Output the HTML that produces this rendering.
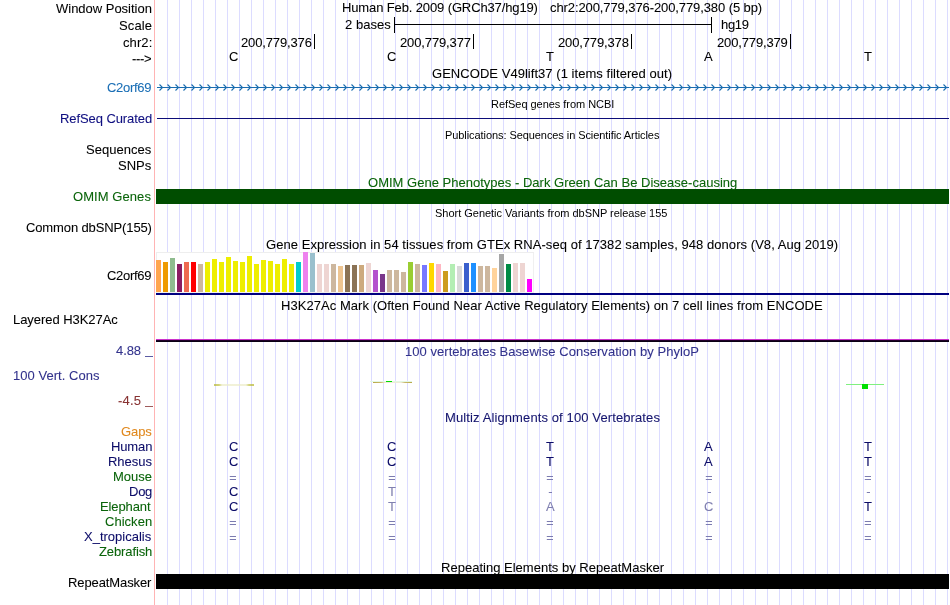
<!DOCTYPE html>
<html><head><meta charset="utf-8"><style>
html,body{margin:0;padding:0;background:#fff;}
#c{position:relative;width:950px;height:605px;overflow:hidden;background:#fff;}
.t{position:absolute;white-space:nowrap;font-family:'Liberation Sans', sans-serif;line-height:13px;will-change:transform;}
.r{position:absolute;}
</style></head><body><div id="c">
<div class="r" style="left:167px;top:0;width:783px;height:605px;background-image:linear-gradient(to right,#DCDCFF 1px,transparent 1px);background-size:12px 605px;"></div>
<div class="r" style="left:154px;top:0;width:1px;height:605px;background:#FFB4B4"></div>
<div class="r" style="left:394px;top:24px;width:318px;height:1px;background:#000;"></div>
<div class="r" style="left:394px;top:17px;width:1px;height:16px;background:#000;"></div>
<div class="r" style="left:711px;top:17px;width:1px;height:16px;background:#000;"></div>
<div class="r" style="left:314px;top:34px;width:1px;height:15px;background:#000;"></div>
<div class="r" style="left:473px;top:34px;width:1px;height:15px;background:#000;"></div>
<div class="r" style="left:631px;top:34px;width:1px;height:15px;background:#000;"></div>
<div class="r" style="left:790px;top:34px;width:1px;height:15px;background:#000;"></div>
<svg class="r" style="left:0;top:0" width="950" height="605"><rect x="157" y="87" width="792" height="1" fill="#1A6DB0"/><path d="M159.5,84.5L162.5,87.5L159.5,90.5M167.5,84.5L170.5,87.5L167.5,90.5M175.5,84.5L178.5,87.5L175.5,90.5M183.5,84.5L186.5,87.5L183.5,90.5M191.5,84.5L194.5,87.5L191.5,90.5M199.5,84.5L202.5,87.5L199.5,90.5M207.5,84.5L210.5,87.5L207.5,90.5M215.5,84.5L218.5,87.5L215.5,90.5M223.5,84.5L226.5,87.5L223.5,90.5M231.5,84.5L234.5,87.5L231.5,90.5M239.5,84.5L242.5,87.5L239.5,90.5M247.5,84.5L250.5,87.5L247.5,90.5M255.5,84.5L258.5,87.5L255.5,90.5M263.5,84.5L266.5,87.5L263.5,90.5M271.5,84.5L274.5,87.5L271.5,90.5M279.5,84.5L282.5,87.5L279.5,90.5M287.5,84.5L290.5,87.5L287.5,90.5M295.5,84.5L298.5,87.5L295.5,90.5M303.5,84.5L306.5,87.5L303.5,90.5M311.5,84.5L314.5,87.5L311.5,90.5M319.5,84.5L322.5,87.5L319.5,90.5M327.5,84.5L330.5,87.5L327.5,90.5M335.5,84.5L338.5,87.5L335.5,90.5M343.5,84.5L346.5,87.5L343.5,90.5M351.5,84.5L354.5,87.5L351.5,90.5M359.5,84.5L362.5,87.5L359.5,90.5M367.5,84.5L370.5,87.5L367.5,90.5M375.5,84.5L378.5,87.5L375.5,90.5M383.5,84.5L386.5,87.5L383.5,90.5M391.5,84.5L394.5,87.5L391.5,90.5M399.5,84.5L402.5,87.5L399.5,90.5M407.5,84.5L410.5,87.5L407.5,90.5M415.5,84.5L418.5,87.5L415.5,90.5M423.5,84.5L426.5,87.5L423.5,90.5M431.5,84.5L434.5,87.5L431.5,90.5M439.5,84.5L442.5,87.5L439.5,90.5M447.5,84.5L450.5,87.5L447.5,90.5M455.5,84.5L458.5,87.5L455.5,90.5M463.5,84.5L466.5,87.5L463.5,90.5M471.5,84.5L474.5,87.5L471.5,90.5M479.5,84.5L482.5,87.5L479.5,90.5M487.5,84.5L490.5,87.5L487.5,90.5M495.5,84.5L498.5,87.5L495.5,90.5M503.5,84.5L506.5,87.5L503.5,90.5M511.5,84.5L514.5,87.5L511.5,90.5M519.5,84.5L522.5,87.5L519.5,90.5M527.5,84.5L530.5,87.5L527.5,90.5M535.5,84.5L538.5,87.5L535.5,90.5M543.5,84.5L546.5,87.5L543.5,90.5M551.5,84.5L554.5,87.5L551.5,90.5M559.5,84.5L562.5,87.5L559.5,90.5M567.5,84.5L570.5,87.5L567.5,90.5M575.5,84.5L578.5,87.5L575.5,90.5M583.5,84.5L586.5,87.5L583.5,90.5M591.5,84.5L594.5,87.5L591.5,90.5M599.5,84.5L602.5,87.5L599.5,90.5M607.5,84.5L610.5,87.5L607.5,90.5M615.5,84.5L618.5,87.5L615.5,90.5M623.5,84.5L626.5,87.5L623.5,90.5M631.5,84.5L634.5,87.5L631.5,90.5M639.5,84.5L642.5,87.5L639.5,90.5M647.5,84.5L650.5,87.5L647.5,90.5M655.5,84.5L658.5,87.5L655.5,90.5M663.5,84.5L666.5,87.5L663.5,90.5M671.5,84.5L674.5,87.5L671.5,90.5M679.5,84.5L682.5,87.5L679.5,90.5M687.5,84.5L690.5,87.5L687.5,90.5M695.5,84.5L698.5,87.5L695.5,90.5M703.5,84.5L706.5,87.5L703.5,90.5M711.5,84.5L714.5,87.5L711.5,90.5M719.5,84.5L722.5,87.5L719.5,90.5M727.5,84.5L730.5,87.5L727.5,90.5M735.5,84.5L738.5,87.5L735.5,90.5M743.5,84.5L746.5,87.5L743.5,90.5M751.5,84.5L754.5,87.5L751.5,90.5M759.5,84.5L762.5,87.5L759.5,90.5M767.5,84.5L770.5,87.5L767.5,90.5M775.5,84.5L778.5,87.5L775.5,90.5M783.5,84.5L786.5,87.5L783.5,90.5M791.5,84.5L794.5,87.5L791.5,90.5M799.5,84.5L802.5,87.5L799.5,90.5M807.5,84.5L810.5,87.5L807.5,90.5M815.5,84.5L818.5,87.5L815.5,90.5M823.5,84.5L826.5,87.5L823.5,90.5M831.5,84.5L834.5,87.5L831.5,90.5M839.5,84.5L842.5,87.5L839.5,90.5M847.5,84.5L850.5,87.5L847.5,90.5M855.5,84.5L858.5,87.5L855.5,90.5M863.5,84.5L866.5,87.5L863.5,90.5M871.5,84.5L874.5,87.5L871.5,90.5M879.5,84.5L882.5,87.5L879.5,90.5M887.5,84.5L890.5,87.5L887.5,90.5M895.5,84.5L898.5,87.5L895.5,90.5M903.5,84.5L906.5,87.5L903.5,90.5M911.5,84.5L914.5,87.5L911.5,90.5M919.5,84.5L922.5,87.5L919.5,90.5M927.5,84.5L930.5,87.5L927.5,90.5M935.5,84.5L938.5,87.5L935.5,90.5M943.5,84.5L946.5,87.5L943.5,90.5" stroke="#1A6DB0" stroke-width="1.1" fill="none"/></svg>
<div class="r" style="left:157px;top:118px;width:792px;height:1px;background:#0C0C78;"></div>
<div class="r" style="left:156px;top:189px;width:793px;height:15px;background:#004D00;"></div>
<div class="r" style="left:156px;top:252px;width:378px;height:41px;background:#fff;box-shadow:inset 1px 1px 0 #EEEEEE, inset -1px -1px 0 #F0F0F0;"></div>
<div class="r" style="left:156px;top:260px;width:5px;height:32px;background:#FFA54F;"></div>
<div class="r" style="left:163px;top:262px;width:5px;height:30px;background:#EE9A00;"></div>
<div class="r" style="left:170px;top:258px;width:5px;height:34px;background:#8FBC8F;"></div>
<div class="r" style="left:177px;top:264px;width:5px;height:28px;background:#8B1C62;"></div>
<div class="r" style="left:184px;top:262px;width:5px;height:30px;background:#EE6A50;"></div>
<div class="r" style="left:191px;top:262px;width:5px;height:30px;background:#FF0000;"></div>
<div class="r" style="left:198px;top:264px;width:5px;height:28px;background:#CDB79E;"></div>
<div class="r" style="left:205px;top:262px;width:5px;height:30px;background:#EEEE00;"></div>
<div class="r" style="left:212px;top:259px;width:5px;height:33px;background:#EEEE00;"></div>
<div class="r" style="left:219px;top:262px;width:5px;height:30px;background:#EEEE00;"></div>
<div class="r" style="left:226px;top:257px;width:5px;height:35px;background:#EEEE00;"></div>
<div class="r" style="left:233px;top:261px;width:5px;height:31px;background:#EEEE00;"></div>
<div class="r" style="left:240px;top:262px;width:5px;height:30px;background:#EEEE00;"></div>
<div class="r" style="left:247px;top:256px;width:5px;height:36px;background:#EEEE00;"></div>
<div class="r" style="left:254px;top:264px;width:5px;height:28px;background:#EEEE00;"></div>
<div class="r" style="left:261px;top:260px;width:5px;height:32px;background:#EEEE00;"></div>
<div class="r" style="left:268px;top:261px;width:5px;height:31px;background:#EEEE00;"></div>
<div class="r" style="left:275px;top:264px;width:5px;height:28px;background:#EEEE00;"></div>
<div class="r" style="left:282px;top:259px;width:5px;height:33px;background:#EEEE00;"></div>
<div class="r" style="left:289px;top:264px;width:5px;height:28px;background:#EEEE00;"></div>
<div class="r" style="left:296px;top:262px;width:5px;height:30px;background:#00CDCD;"></div>
<div class="r" style="left:303px;top:252px;width:5px;height:40px;background:#EE82EE;"></div>
<div class="r" style="left:310px;top:253px;width:5px;height:39px;background:#9AC0CD;"></div>
<div class="r" style="left:317px;top:264px;width:5px;height:28px;background:#EED5D2;"></div>
<div class="r" style="left:324px;top:264px;width:5px;height:28px;background:#EED5D2;"></div>
<div class="r" style="left:331px;top:264px;width:5px;height:28px;background:#CDB79E;"></div>
<div class="r" style="left:338px;top:266px;width:5px;height:26px;background:#EEC591;"></div>
<div class="r" style="left:345px;top:265px;width:5px;height:27px;background:#8B7355;"></div>
<div class="r" style="left:352px;top:265px;width:5px;height:27px;background:#8B7355;"></div>
<div class="r" style="left:359px;top:265px;width:5px;height:27px;background:#CDAA7D;"></div>
<div class="r" style="left:366px;top:263px;width:5px;height:29px;background:#EED5D2;"></div>
<div class="r" style="left:373px;top:270px;width:5px;height:22px;background:#B452CD;"></div>
<div class="r" style="left:380px;top:274px;width:5px;height:18px;background:#7A378B;"></div>
<div class="r" style="left:387px;top:270px;width:5px;height:22px;background:#CDB79E;"></div>
<div class="r" style="left:394px;top:270px;width:5px;height:22px;background:#CDB79E;"></div>
<div class="r" style="left:401px;top:272px;width:5px;height:20px;background:#CDB79E;"></div>
<div class="r" style="left:408px;top:262px;width:5px;height:30px;background:#9ACD32;"></div>
<div class="r" style="left:415px;top:264px;width:5px;height:28px;background:#CDB79E;"></div>
<div class="r" style="left:422px;top:265px;width:5px;height:27px;background:#7777FF;"></div>
<div class="r" style="left:429px;top:263px;width:5px;height:29px;background:#FFD700;"></div>
<div class="r" style="left:436px;top:264px;width:5px;height:28px;background:#FFB6C1;"></div>
<div class="r" style="left:443px;top:271px;width:5px;height:21px;background:#CD9B1D;"></div>
<div class="r" style="left:450px;top:264px;width:5px;height:28px;background:#B4EEB4;"></div>
<div class="r" style="left:457px;top:266px;width:5px;height:26px;background:#D9D9D9;"></div>
<div class="r" style="left:464px;top:263px;width:5px;height:29px;background:#3A5FCD;"></div>
<div class="r" style="left:471px;top:263px;width:5px;height:29px;background:#1E90FF;"></div>
<div class="r" style="left:478px;top:266px;width:5px;height:26px;background:#CDB79E;"></div>
<div class="r" style="left:485px;top:266px;width:5px;height:26px;background:#CDB79E;"></div>
<div class="r" style="left:492px;top:268px;width:5px;height:24px;background:#FFD39B;"></div>
<div class="r" style="left:499px;top:254px;width:5px;height:38px;background:#A6A6A6;"></div>
<div class="r" style="left:506px;top:264px;width:5px;height:28px;background:#008B45;"></div>
<div class="r" style="left:513px;top:263px;width:5px;height:29px;background:#EED5D2;"></div>
<div class="r" style="left:520px;top:263px;width:5px;height:29px;background:#EED5D2;"></div>
<div class="r" style="left:527px;top:279px;width:5px;height:13px;background:#FF00FF;"></div>
<div class="r" style="left:156px;top:293px;width:793px;height:2px;background:#000080;"></div>
<div class="r" style="left:156px;top:339px;width:793px;height:1px;background:#CC33CC;"></div>
<div class="r" style="left:156px;top:340px;width:793px;height:1px;background:#1E0028;"></div>
<div class="r" style="left:156px;top:341px;width:793px;height:1px;background:#0A0014;"></div>
<div class="r" style="left:214px;top:384px;width:40px;height:2px;background:linear-gradient(to right,#B4B428 0,#C0C040 5px,#ECECC8 8px,#ECECC8 32px,#C0C040 35px,#B4B428 40px);opacity:0.7"></div>
<div class="r" style="left:370px;top:381px;width:42px;height:1px;background:#E4F8E4;"></div>
<div class="r" style="left:373px;top:382px;width:39px;height:1px;background:linear-gradient(to right,#B8A848 0,#C8B868 8px,#EFEBD8 12px,#EFEBD8 28px,#C8B868 32px,#B8A848 39px);"></div>
<div class="r" style="left:386px;top:381px;width:6px;height:1px;background:#00DD00;"></div>
<div class="r" style="left:846px;top:384px;width:38px;height:1px;background:#80F080;"></div>
<div class="r" style="left:862px;top:384px;width:6px;height:5px;background:#00E000;"></div>
<div class="r" style="left:156px;top:574px;width:793px;height:15px;background:#000;"></div>
<div class="r" style="left:145px;top:356px;width:8px;height:1px;background:#32328C;opacity:0.8"></div>
<div class="r" style="left:145px;top:406px;width:8px;height:1px;background:#873232;opacity:0.8"></div>
<div class="r" style="left:230px;top:476px;width:6px;height:1px;background:#7C7CB0;box-shadow:-0.6px 0 0.4px rgba(124,124,176,0.35)"></div>
<div class="r" style="left:230px;top:479px;width:6px;height:1px;background:#7C7CB0;box-shadow:-0.6px 0 0.4px rgba(124,124,176,0.35)"></div>
<div class="r" style="left:389px;top:476px;width:6px;height:1px;background:#7C7CB0;box-shadow:-0.6px 0 0.4px rgba(124,124,176,0.35)"></div>
<div class="r" style="left:389px;top:479px;width:6px;height:1px;background:#7C7CB0;box-shadow:-0.6px 0 0.4px rgba(124,124,176,0.35)"></div>
<div class="r" style="left:547px;top:476px;width:6px;height:1px;background:#7C7CB0;box-shadow:-0.6px 0 0.4px rgba(124,124,176,0.35)"></div>
<div class="r" style="left:547px;top:479px;width:6px;height:1px;background:#7C7CB0;box-shadow:-0.6px 0 0.4px rgba(124,124,176,0.35)"></div>
<div class="r" style="left:706px;top:476px;width:6px;height:1px;background:#7C7CB0;box-shadow:-0.6px 0 0.4px rgba(124,124,176,0.35)"></div>
<div class="r" style="left:706px;top:479px;width:6px;height:1px;background:#7C7CB0;box-shadow:-0.6px 0 0.4px rgba(124,124,176,0.35)"></div>
<div class="r" style="left:865px;top:476px;width:6px;height:1px;background:#7C7CB0;box-shadow:-0.6px 0 0.4px rgba(124,124,176,0.35)"></div>
<div class="r" style="left:865px;top:479px;width:6px;height:1px;background:#7C7CB0;box-shadow:-0.6px 0 0.4px rgba(124,124,176,0.35)"></div>
<div class="r" style="left:549px;top:492px;width:3px;height:1px;background:#7C7CB0;box-shadow:-0.6px 0 0.4px rgba(124,124,176,0.35)"></div>
<div class="r" style="left:708px;top:492px;width:3px;height:1px;background:#7C7CB0;box-shadow:-0.6px 0 0.4px rgba(124,124,176,0.35)"></div>
<div class="r" style="left:867px;top:492px;width:3px;height:1px;background:#7C7CB0;box-shadow:-0.6px 0 0.4px rgba(124,124,176,0.35)"></div>
<div class="r" style="left:230px;top:521px;width:6px;height:1px;background:#7C7CB0;box-shadow:-0.6px 0 0.4px rgba(124,124,176,0.35)"></div>
<div class="r" style="left:230px;top:524px;width:6px;height:1px;background:#7C7CB0;box-shadow:-0.6px 0 0.4px rgba(124,124,176,0.35)"></div>
<div class="r" style="left:389px;top:521px;width:6px;height:1px;background:#7C7CB0;box-shadow:-0.6px 0 0.4px rgba(124,124,176,0.35)"></div>
<div class="r" style="left:389px;top:524px;width:6px;height:1px;background:#7C7CB0;box-shadow:-0.6px 0 0.4px rgba(124,124,176,0.35)"></div>
<div class="r" style="left:547px;top:521px;width:6px;height:1px;background:#7C7CB0;box-shadow:-0.6px 0 0.4px rgba(124,124,176,0.35)"></div>
<div class="r" style="left:547px;top:524px;width:6px;height:1px;background:#7C7CB0;box-shadow:-0.6px 0 0.4px rgba(124,124,176,0.35)"></div>
<div class="r" style="left:706px;top:521px;width:6px;height:1px;background:#7C7CB0;box-shadow:-0.6px 0 0.4px rgba(124,124,176,0.35)"></div>
<div class="r" style="left:706px;top:524px;width:6px;height:1px;background:#7C7CB0;box-shadow:-0.6px 0 0.4px rgba(124,124,176,0.35)"></div>
<div class="r" style="left:865px;top:521px;width:6px;height:1px;background:#7C7CB0;box-shadow:-0.6px 0 0.4px rgba(124,124,176,0.35)"></div>
<div class="r" style="left:865px;top:524px;width:6px;height:1px;background:#7C7CB0;box-shadow:-0.6px 0 0.4px rgba(124,124,176,0.35)"></div>
<div class="r" style="left:230px;top:536px;width:6px;height:1px;background:#7C7CB0;box-shadow:-0.6px 0 0.4px rgba(124,124,176,0.35)"></div>
<div class="r" style="left:230px;top:539px;width:6px;height:1px;background:#7C7CB0;box-shadow:-0.6px 0 0.4px rgba(124,124,176,0.35)"></div>
<div class="r" style="left:389px;top:536px;width:6px;height:1px;background:#7C7CB0;box-shadow:-0.6px 0 0.4px rgba(124,124,176,0.35)"></div>
<div class="r" style="left:389px;top:539px;width:6px;height:1px;background:#7C7CB0;box-shadow:-0.6px 0 0.4px rgba(124,124,176,0.35)"></div>
<div class="r" style="left:547px;top:536px;width:6px;height:1px;background:#7C7CB0;box-shadow:-0.6px 0 0.4px rgba(124,124,176,0.35)"></div>
<div class="r" style="left:547px;top:539px;width:6px;height:1px;background:#7C7CB0;box-shadow:-0.6px 0 0.4px rgba(124,124,176,0.35)"></div>
<div class="r" style="left:706px;top:536px;width:6px;height:1px;background:#7C7CB0;box-shadow:-0.6px 0 0.4px rgba(124,124,176,0.35)"></div>
<div class="r" style="left:706px;top:539px;width:6px;height:1px;background:#7C7CB0;box-shadow:-0.6px 0 0.4px rgba(124,124,176,0.35)"></div>
<div class="r" style="left:865px;top:536px;width:6px;height:1px;background:#7C7CB0;box-shadow:-0.6px 0 0.4px rgba(124,124,176,0.35)"></div>
<div class="r" style="left:865px;top:539px;width:6px;height:1px;background:#7C7CB0;box-shadow:-0.6px 0 0.4px rgba(124,124,176,0.35)"></div>
<div class="t" style="left:56.20px;top:2px;font-size:13px;letter-spacing:-0.014px;color:#000;-webkit-text-stroke:0.08px;">Window Position</div>
<div class="t" style="left:118.50px;top:19px;font-size:13px;letter-spacing:0.125px;color:#000;-webkit-text-stroke:0.08px;">Scale</div>
<div class="t" style="left:122.66px;top:36px;font-size:13px;letter-spacing:0.085px;color:#000;-webkit-text-stroke:0.08px;">chr2:</div>
<div class="t" style="left:131.93px;top:52px;font-size:13px;letter-spacing:-0.310px;color:#000;-webkit-text-stroke:0.08px;">---&gt;</div>
<div class="t" style="left:341.90px;top:1px;font-size:13px;letter-spacing:-0.125px;color:#000;-webkit-text-stroke:0.08px;">Human Feb. 2009 (GRCh37/hg19)</div>
<div class="t" style="left:549.76px;top:1px;font-size:13px;letter-spacing:-0.096px;color:#000;-webkit-text-stroke:0.08px;">chr2:200,779,376-200,779,380 (5 bp)</div>
<div class="t" style="left:344.67px;top:18px;font-size:13px;letter-spacing:0.038px;color:#000;-webkit-text-stroke:0.08px;">2 bases</div>
<div class="t" style="left:720.60px;top:18px;font-size:13px;letter-spacing:-0.323px;color:#000;-webkit-text-stroke:0.08px;">hg19</div>
<div class="t" style="left:240.67px;top:36px;font-size:13px;letter-spacing:-0.137px;color:#000;-webkit-text-stroke:0.08px;">200,779,376</div>
<div class="t" style="left:399.67px;top:36px;font-size:13px;letter-spacing:-0.127px;color:#000;-webkit-text-stroke:0.08px;">200,779,377</div>
<div class="t" style="left:558.17px;top:36px;font-size:13px;letter-spacing:-0.137px;color:#000;-webkit-text-stroke:0.08px;">200,779,378</div>
<div class="t" style="left:716.77px;top:36px;font-size:13px;letter-spacing:-0.147px;color:#000;-webkit-text-stroke:0.08px;">200,779,379</div>
<div class="t" style="left:229.17px;top:50px;font-size:13px;letter-spacing:0.000px;color:#000;-webkit-text-stroke:0.08px;">C</div>
<div class="t" style="left:387.07px;top:50px;font-size:13px;letter-spacing:0.000px;color:#000;-webkit-text-stroke:0.08px;">C</div>
<div class="t" style="left:545.90px;top:50px;font-size:13px;letter-spacing:0.000px;color:#000;-webkit-text-stroke:0.08px;">T</div>
<div class="t" style="left:704.06px;top:50px;font-size:13px;letter-spacing:0.000px;color:#000;-webkit-text-stroke:0.08px;">A</div>
<div class="t" style="left:863.90px;top:50px;font-size:13px;letter-spacing:0.000px;color:#000;-webkit-text-stroke:0.08px;">T</div>
<div class="t" style="left:431.95px;top:67px;font-size:13px;letter-spacing:0.042px;color:#000;-webkit-text-stroke:0.08px;">GENCODE V49lift37 (1 items filtered out)</div>
<div class="t" style="left:106.75px;top:81px;font-size:13px;letter-spacing:-0.292px;color:#1A6EB5;-webkit-text-stroke:0.08px;">C2orf69</div>
<div class="t" style="left:491.00px;top:98px;font-size:11px;letter-spacing:-0.038px;color:#000;">RefSeq genes from NCBI</div>
<div class="t" style="left:59.70px;top:112px;font-size:13px;letter-spacing:-0.085px;color:#0F0F80;-webkit-text-stroke:0.08px;">RefSeq Curated</div>
<div class="t" style="left:445.00px;top:129px;font-size:11px;letter-spacing:-0.073px;color:#000;">Publications: Sequences in Scientific Articles</div>
<div class="t" style="left:86.40px;top:143px;font-size:13px;letter-spacing:0.015px;color:#000;-webkit-text-stroke:0.08px;">Sequences</div>
<div class="t" style="left:118.00px;top:159px;font-size:13px;letter-spacing:0.000px;color:#000;-webkit-text-stroke:0.08px;">SNPs</div>
<div class="t" style="left:367.80px;top:176px;font-size:13px;letter-spacing:0.015px;color:#0A640A;-webkit-text-stroke:0.08px;">OMIM Gene Phenotypes - Dark Green Can Be Disease-causing</div>
<div class="t" style="left:73.40px;top:190px;font-size:13px;letter-spacing:0.067px;color:#0A640A;-webkit-text-stroke:0.08px;">OMIM Genes</div>
<div class="t" style="left:435.40px;top:207px;font-size:11px;letter-spacing:-0.018px;color:#000;">Short Genetic Variants from dbSNP release 155</div>
<div class="t" style="left:25.95px;top:221px;font-size:13px;letter-spacing:-0.122px;color:#000;-webkit-text-stroke:0.08px;">Common dbSNP(155)</div>
<div class="t" style="left:265.65px;top:238px;font-size:13px;letter-spacing:0.055px;color:#000;-webkit-text-stroke:0.08px;">Gene Expression in 54 tissues from GTEx RNA-seq of 17382 samples, 948 donors (V8, Aug 2019)</div>
<div class="t" style="left:106.75px;top:269px;font-size:13px;letter-spacing:-0.292px;color:#000;-webkit-text-stroke:0.08px;">C2orf69</div>
<div class="t" style="left:280.80px;top:299px;font-size:13px;letter-spacing:0.049px;color:#000;-webkit-text-stroke:0.08px;">H3K27Ac Mark (Often Found Near Active Regulatory Elements) on 7 cell lines from ENCODE</div>
<div class="t" style="left:13.00px;top:313px;font-size:13px;letter-spacing:-0.050px;color:#000;-webkit-text-stroke:0.08px;">Layered H3K27Ac</div>
<div class="t" style="left:405.00px;top:345px;font-size:13px;letter-spacing:0.041px;color:#32328C;-webkit-text-stroke:0.08px;">100 vertebrates Basewise Conservation by PhyloP</div>
<div class="t" style="left:116.20px;top:344px;font-size:13px;letter-spacing:-0.100px;color:#32328C;-webkit-text-stroke:0.08px;">4.88</div>
<div class="t" style="left:13.00px;top:369px;font-size:13px;letter-spacing:0.040px;color:#32328C;-webkit-text-stroke:0.08px;">100 Vert. Cons</div>
<div class="t" style="left:118.33px;top:394px;font-size:13px;letter-spacing:0.190px;color:#873232;-webkit-text-stroke:0.08px;">-4.5</div>
<div class="t" style="left:444.80px;top:411px;font-size:13px;letter-spacing:0.112px;color:#14146E;-webkit-text-stroke:0.08px;">Multiz Alignments of 100 Vertebrates</div>
<div class="t" style="left:120.75px;top:425px;font-size:13px;letter-spacing:-0.077px;color:#E0881E;-webkit-text-stroke:0.08px;">Gaps</div>
<div class="t" style="left:110.50px;top:440px;font-size:13px;letter-spacing:-0.125px;color:#0C0C68;-webkit-text-stroke:0.08px;">Human</div>
<div class="t" style="left:107.60px;top:455px;font-size:13px;letter-spacing:-0.016px;color:#0C0C68;-webkit-text-stroke:0.08px;">Rhesus</div>
<div class="t" style="left:112.60px;top:470px;font-size:13px;letter-spacing:0.000px;color:#0A640A;-webkit-text-stroke:0.08px;">Mouse</div>
<div class="t" style="left:128.50px;top:485px;font-size:13px;letter-spacing:-0.250px;color:#0C0C68;-webkit-text-stroke:0.08px;">Dog</div>
<div class="t" style="left:100.40px;top:500px;font-size:13px;letter-spacing:-0.101px;color:#0A640A;-webkit-text-stroke:0.08px;">Elephant</div>
<div class="t" style="left:104.85px;top:515px;font-size:13px;letter-spacing:0.025px;color:#0A640A;-webkit-text-stroke:0.08px;">Chicken</div>
<div class="t" style="left:84.01px;top:530px;font-size:13px;letter-spacing:-0.001px;color:#0C0C68;-webkit-text-stroke:0.08px;">X_tropicalis</div>
<div class="t" style="left:98.50px;top:545px;font-size:13px;letter-spacing:-0.116px;color:#0A640A;-webkit-text-stroke:0.08px;">Zebrafish</div>
<div class="t" style="left:229.17px;top:440px;font-size:13px;letter-spacing:0.000px;color:#0C0C68;-webkit-text-stroke:0.08px;">C</div>
<div class="t" style="left:387.07px;top:440px;font-size:13px;letter-spacing:0.000px;color:#0C0C68;-webkit-text-stroke:0.08px;">C</div>
<div class="t" style="left:545.90px;top:440px;font-size:13px;letter-spacing:0.000px;color:#0C0C68;-webkit-text-stroke:0.08px;">T</div>
<div class="t" style="left:704.06px;top:440px;font-size:13px;letter-spacing:0.000px;color:#0C0C68;-webkit-text-stroke:0.08px;">A</div>
<div class="t" style="left:863.90px;top:440px;font-size:13px;letter-spacing:0.000px;color:#0C0C68;-webkit-text-stroke:0.08px;">T</div>
<div class="t" style="left:229.17px;top:455px;font-size:13px;letter-spacing:0.000px;color:#0C0C68;-webkit-text-stroke:0.08px;">C</div>
<div class="t" style="left:387.07px;top:455px;font-size:13px;letter-spacing:0.000px;color:#0C0C68;-webkit-text-stroke:0.08px;">C</div>
<div class="t" style="left:545.90px;top:455px;font-size:13px;letter-spacing:0.000px;color:#0C0C68;-webkit-text-stroke:0.08px;">T</div>
<div class="t" style="left:704.06px;top:455px;font-size:13px;letter-spacing:0.000px;color:#0C0C68;-webkit-text-stroke:0.08px;">A</div>
<div class="t" style="left:863.90px;top:455px;font-size:13px;letter-spacing:0.000px;color:#0C0C68;-webkit-text-stroke:0.08px;">T</div>
<div class="t" style="left:229.17px;top:485px;font-size:13px;letter-spacing:0.000px;color:#0C0C68;-webkit-text-stroke:0.08px;">C</div>
<div class="t" style="left:387.60px;top:485px;font-size:13px;letter-spacing:0.000px;color:#8080B0;-webkit-text-stroke:0.08px;">T</div>
<div class="t" style="left:229.17px;top:500px;font-size:13px;letter-spacing:0.000px;color:#0C0C68;-webkit-text-stroke:0.08px;">C</div>
<div class="t" style="left:387.60px;top:500px;font-size:13px;letter-spacing:0.000px;color:#8080B0;-webkit-text-stroke:0.08px;">T</div>
<div class="t" style="left:545.66px;top:500px;font-size:13px;letter-spacing:0.000px;color:#8080B0;-webkit-text-stroke:0.08px;">A</div>
<div class="t" style="left:703.77px;top:500px;font-size:13px;letter-spacing:0.000px;color:#8080B0;-webkit-text-stroke:0.08px;">C</div>
<div class="t" style="left:863.90px;top:500px;font-size:13px;letter-spacing:0.000px;color:#0C0C68;-webkit-text-stroke:0.08px;">T</div>
<div class="t" style="left:441.00px;top:561px;font-size:13px;letter-spacing:0.015px;color:#000;-webkit-text-stroke:0.08px;">Repeating Elements by RepeatMasker</div>
<div class="t" style="left:67.70px;top:576px;font-size:13px;letter-spacing:-0.100px;color:#000;-webkit-text-stroke:0.08px;">RepeatMasker</div>
</div></body></html>
